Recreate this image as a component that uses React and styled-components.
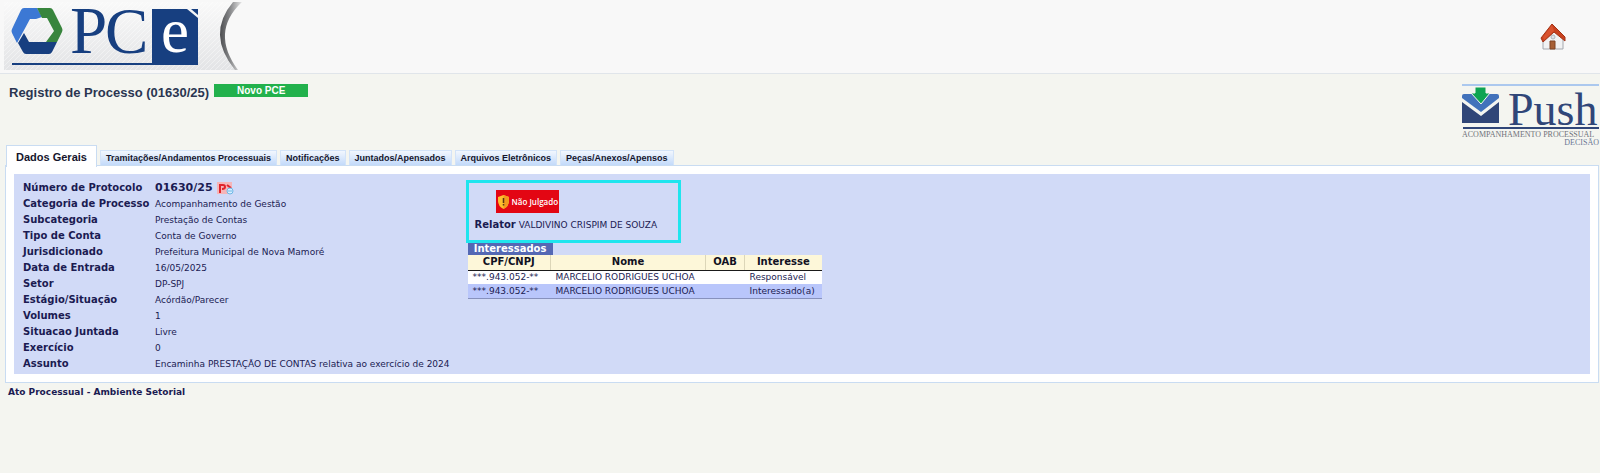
import React from 'react';
import styled, { createGlobalStyle } from 'styled-components';

const GlobalStyle = createGlobalStyle`
    * {
        box-sizing: border-box;
    }

    body {
        margin: 0;
        background-color: #f4f5f0;
        color: #1b1b52;
        font-family: 'DejaVu Sans', Verdana, sans-serif;
        font-size: 9px;
    }
`

const TopBar = styled.header`
    display: flex;
    justify-content: space-between;
    align-items: center;
    height: 74px;
    padding: 0 24px 0 4px;
    background-color: #f8f8f8;
    border-bottom: 1px solid #e0e5ea;
`

const HomeLink = styled.a`
    display: flex;
    padding: 0 10px;
`

const SubHeader = styled.div`
    display: flex;
    justify-content: space-between;
    align-items: flex-start;
    height: 71px;
    padding: 10px 0 0 9px;
`

const TitleRow = styled.div`
    display: flex;
    align-items: flex-start;
    gap: 5px;
`

const Title = styled.h1`
    margin: 0;
    color: #2a3550;
    font-family: 'Liberation Sans', Arial, sans-serif;
    font-size: 13px;
    line-height: 18px;
`

const NewButton = styled.button`
    width: 94px;
    height: 13px;
    padding: 0;
    border: none;
    background-color: #22b14c;
    color: #ffffff;
    font-family: 'Liberation Sans', Arial, sans-serif;
    font-size: 10px;
    font-weight: bold;
    line-height: 13px;
    cursor: pointer;
`

const Logo = styled.svg`
    display: block;
    overflow: visible;
    font-family: 'Liberation Serif', 'Times New Roman', serif;
`

const Tabs = styled.nav`
    display: flex;
    align-items: flex-end;
    gap: 3px;
    height: 20px;
    padding-left: 6px;
`

const Tab = styled.button`
    height: ${props => props.$active ? '22px' : '15px'};
    margin-bottom: ${props => props.$active ? '-2px' : '0'};
    padding: 0 ${props => props.$active ? '9px' : '5px'};
    border: 1px solid ${props => props.$active ? '#c9dcf2' : '#d3e3f8'};
    border-bottom: none;
    background: ${props => props.$active ? '#ffffff' : 'linear-gradient(#f2f7fe, #c3dafa)'};
    color: #15152c;
    font-family: 'Liberation Sans', Arial, sans-serif;
    font-size: ${props => props.$active ? '11px' : '9px'};
    font-weight: bold;
    cursor: pointer;
`

const Panel = styled.main`
    margin: 0 1px 0 5px;
    padding: 8px;
    border: 1px solid #c9dcf2;
    background-color: #ffffff;
`

const Content = styled.div`
    display: flex;
    align-items: flex-start;
    gap: 16px;
    padding: 6px 9px 2px;
    background-color: #d1daf7;
`

const Fields = styled.dl`
    display: grid;
    grid-template-columns: 132px auto;
    grid-auto-rows: 16px;
    margin: 0;
    line-height: 16px;
    white-space: nowrap;
`

const Label = styled.dt`
    font-size: 10px;
    font-weight: bold;
`

const Value = styled.dd`
    display: flex;
    align-items: center;
    gap: 4px;
    margin: 0;
    font-size: ${props => props.$strong ? '11px' : '9px'};
    font-weight: ${props => props.$strong ? 'bold' : 'normal'};
`

const Summary = styled.section`
    display: flex;
    flex-flow: column nowrap;
    align-items: flex-start;
`

const Judgement = styled.div`
    display: flex;
    flex-flow: column nowrap;
    align-items: flex-start;
    gap: 4px;
    width: 215px;
    padding: 7px 6px;
    border: 3px solid #1fe5ee;
    line-height: 16px;
    white-space: nowrap;
`

const Status = styled.span`
    display: flex;
    align-items: center;
    gap: 3px;
    width: 63px;
    height: 23px;
    margin-left: 21px;
    padding-left: 2px;
    background-color: #e30613;
    color: #ffffff;
    font-family: 'Open Sans', 'Noto Sans', sans-serif;
    font-size: 8px;
    font-weight: 600;
`

const Rapporteur = styled.div`
    b {
        font-size: 10px;
    }
`

const PartiesTable = styled.table`
    margin-left: 2px;
    border-collapse: collapse;
    border-bottom: 1px solid #8791bd;
    line-height: 12px;
    white-space: nowrap;

    caption {
        width: 85px;
        background-color: #5468b4;
        color: #ffffff;
        font-size: 10px;
        font-weight: bold;
        text-align: center;
    }

    th {
        height: 15px;
        padding: 0 4px;
        border-bottom: 1px solid #1a1a1a;
        background-color: #fdf7d9;
        color: #111122;
        font-size: 10px;
    }

    th + th {
        border-left: 1px solid #dcd6b8;
    }

    td {
        height: 14px;
        padding: 0 5px;
        background-color: #ffffff;
    }

    tr:nth-child(even) td {
        background-color: #b9c6fb;
    }
`

const Column = styled.col`
    width: ${props => props.$width};
`

const Footer = styled.footer`
    padding: 2px 8px;
    font-weight: bold;
    line-height: 14px;
`

const tabs = [
    'Dados Gerais',
    'Tramitações/Andamentos Processuais',
    'Notificações',
    'Juntados/Apensados',
    'Arquivos Eletrônicos',
    'Peças/Anexos/Apensos',
]

const fields = [
    { label: 'Número de Protocolo', value: '01630/25', strong: true },
    { label: 'Categoria de Processo', value: 'Acompanhamento de Gestão' },
    { label: 'Subcategoria', value: 'Prestação de Contas' },
    { label: 'Tipo de Conta', value: 'Conta de Governo' },
    { label: 'Jurisdicionado', value: 'Prefeitura Municipal de Nova Mamoré' },
    { label: 'Data de Entrada', value: '16/05/2025' },
    { label: 'Setor', value: 'DP-SPJ' },
    { label: 'Estágio/Situação', value: 'Acórdão/Parecer' },
    { label: 'Volumes', value: '1' },
    { label: 'Situacao Juntada', value: 'Livre' },
    { label: 'Exercício', value: '0' },
    { label: 'Assunto', value: 'Encaminha PRESTAÇÃO DE CONTAS relativa ao exercício de 2024' },
]

const parties = [
    { doc: '***.943.052-**', name: 'MARCELIO RODRIGUES UCHOA', oab: '', role: 'Responsável' },
    { doc: '***.943.052-**', name: 'MARCELIO RODRIGUES UCHOA', oab: '', role: 'Interessado(a)' },
]

const PceLogo = () => (
    <Logo width="240" height="70" viewBox="4 2 240 70" role="img" aria-label="PCe">
        <defs>
            <linearGradient id="fade" x1="0" y1="0" x2="0" y2="1">
                <stop offset="0" stopColor="#f9f9f9" />
                <stop offset="1" stopColor="#e3e4e6" />
            </linearGradient>
            <linearGradient id="curve" x1="0" y1="0" x2="1" y2="0">
                <stop offset="0" stopColor="#4c4d50" />
                <stop offset="0.5" stopColor="#8d8e90" />
                <stop offset="1" stopColor="#e8e8e8" />
            </linearGradient>
            <pattern id="stripes" width="5" height="5" patternUnits="userSpaceOnUse">
                <path d="M-1 6 L6 -1" stroke="#ffffff" strokeWidth="1" opacity="0.4" />
            </pattern>
        </defs>
        <path d="M4 2 H234 Q206 32 236 70 H4 Z" fill="url(#fade)" />
        <path d="M4 2 H234 Q206 32 236 70 H4 Z" fill="url(#stripes)" />
        <path d="M233 2 H242 Q210 32 238 70 H235 Q206 34 233 2 Z" fill="url(#curve)" />
        <path d="M24 8 H37 L42 17 L36 19 H30 L23 32 L17 43 L12 33 Q11 31 12 29 L21 10 Q22 8 24 8 Z" fill="#3c78d4" />
        <path d="M37 8 H50 Q52 8 53 10 L62 28 Q63 30 62 32 L57 42 H46 L54 31 L47 18 H42 Z" fill="#38853d" />
        <path d="M18 43 L24 33 L29 42 H57 L52 52 Q51 54 49 54 H26 Q24 54 23 52 Z" fill="#173f80" />
        <path d="M12 64 H155" stroke="#173f80" strokeWidth="2" />
        <text x="70" y="53" fontSize="67" fill="#173f80">P</text>
        <text x="105" y="53" fontSize="65" fill="#173f80">C</text>
        <path d="M152 9 H198 V65 H152 Z" fill="#173f80" />
        <path d="M187 9 L198 18 V15 L191 9 Z" fill="#f4f5f6" />
        <text x="161" y="52" fontSize="63" fill="#ffffff">e</text>
    </Logo>
)

const HomeIcon = () => (
    <svg width="26" height="28" viewBox="0 0 26 28" aria-hidden="true">
        <path d="M3 14 L12 5 L23 14 V26 H3 Z" fill="#f1f2f3" stroke="#a4a8ae" />
        <path d="M1 15 L12 1 L25 14 V18 L14 9 L3 19 Z" fill="#c9421f" stroke="#a33316" strokeWidth="1" />
        <path d="M3 14 L12 2 L14 8 L4 17 Z" fill="#d9532f" />
        <circle cx="13" cy="14" r="2" fill="#dfe3e8" stroke="#aeb4bb" />
        <path d="M10 18 H15 V26 H10 Z" fill="#a65f35" stroke="#7f4424" />
    </svg>
)

const PushLogo = () => (
    <Logo width="138" height="62" viewBox="0 0 138 62" role="img" aria-label="Push">
        <path d="M0 1 H137" stroke="#abc8ee" strokeWidth="2" />
        <path d="M2 10 H35 Q37 10 37 12 V14 L19 28 L0 14 V12 Q0 10 2 10 Z" fill="#4272bb" />
        <path d="M0 18 L19 32 L37 18 V39 H0 Z" fill="#304678" />
        <path d="M13 3 H24 V9 H28 L19 20 L9 9 H13 Z" fill="#0ea452" stroke="#f4f5f0" />
        <text x="46" y="41" fontSize="46" fill="#304678">Push</text>
        <path d="M1 44 H137" stroke="#304678" strokeWidth="2" />
        <text x="0" y="53" fontSize="8" fill="#70727a">ACOMPANHAMENTO PROCESSUAL</text>
        <text x="137" y="61" textAnchor="end" fontSize="8" fill="#6a7694">DECISÃO</text>
    </Logo>
)

const PdfIcon = () => (
    <svg width="18" height="13" viewBox="0 0 18 13" aria-hidden="true">
        <path d="M0 0 H15 V12 H0 Z" fill="#f5b5b8" />
        <path d="M3 11 V3 H6 Q8 3 8 5 Q8 7 5 7" fill="none" stroke="#e0242c" strokeWidth="2" />
        <path d="M10 3 L14 6" stroke="#e0242c" strokeWidth="2" />
        <circle cx="13" cy="9" r="3" fill="#d9efff" stroke="#6db7e6" />
        <path d="M11 9 H15" stroke="#6db7e6" />
    </svg>
)

const ShieldIcon = () => (
    <svg width="11" height="14" viewBox="0 0 22 28" aria-hidden="true">
        <path d="M11 0 L22 4 V12 Q22 22 11 28 Q0 22 0 12 V4 Z" fill="#fdc02f" />
        <path d="M11 0 L22 4 V12 Q22 22 11 28 Z" fill="#f39a1d" />
        <path d="M11 6 V16 M11 18 V21" stroke="#5a3413" strokeWidth="3" />
    </svg>
)

export default class App extends React.Component {
    render() {
        return (
            <>
                <GlobalStyle />
                <TopBar>
                    <PceLogo />
                    <HomeLink href="#" aria-label="Início">
                        <HomeIcon />
                    </HomeLink>
                </TopBar>
                <SubHeader>
                    <TitleRow>
                        <Title>Registro de Processo (01630/25)</Title>
                        <NewButton>Novo PCE</NewButton>
                    </TitleRow>
                    <a href="#">
                        <PushLogo />
                    </a>
                </SubHeader>
                <Tabs>
                    {tabs.map((tab, index) => (
                        <Tab key={tab} $active={index === 0}>{tab}</Tab>
                    ))}
                </Tabs>
                <Panel>
                    <Content>
                        <Fields>
                            {fields.map(field => (
                                <React.Fragment key={field.label}>
                                    <Label>{field.label}</Label>
                                    <Value $strong={field.strong}>
                                        {field.value}
                                        {field.strong && <PdfIcon />}
                                    </Value>
                                </React.Fragment>
                            ))}
                        </Fields>
                        <Summary>
                            <Judgement>
                                <Status>
                                    <ShieldIcon />
                                    Não Julgado
                                </Status>
                                <Rapporteur>
                                    <b>Relator</b> VALDIVINO CRISPIM DE SOUZA
                                </Rapporteur>
                            </Judgement>
                            <PartiesTable>
                                <caption>Interessados</caption>
                                <colgroup>
                                    <Column $width="83px" />
                                    <Column $width="155px" />
                                    <Column $width="39px" />
                                    <Column $width="77px" />
                                </colgroup>
                                <thead>
                                    <tr>
                                        <th>CPF/CNPJ</th>
                                        <th>Nome</th>
                                        <th>OAB</th>
                                        <th>Interesse</th>
                                    </tr>
                                </thead>
                                <tbody>
                                    {parties.map((party, index) => (
                                        <tr key={index}>
                                            <td>{party.doc}</td>
                                            <td>{party.name}</td>
                                            <td>{party.oab}</td>
                                            <td>{party.role}</td>
                                        </tr>
                                    ))}
                                </tbody>
                            </PartiesTable>
                        </Summary>
                    </Content>
                </Panel>
                <Footer>Ato Processual - Ambiente Setorial</Footer>
            </>
        )
    }
}
